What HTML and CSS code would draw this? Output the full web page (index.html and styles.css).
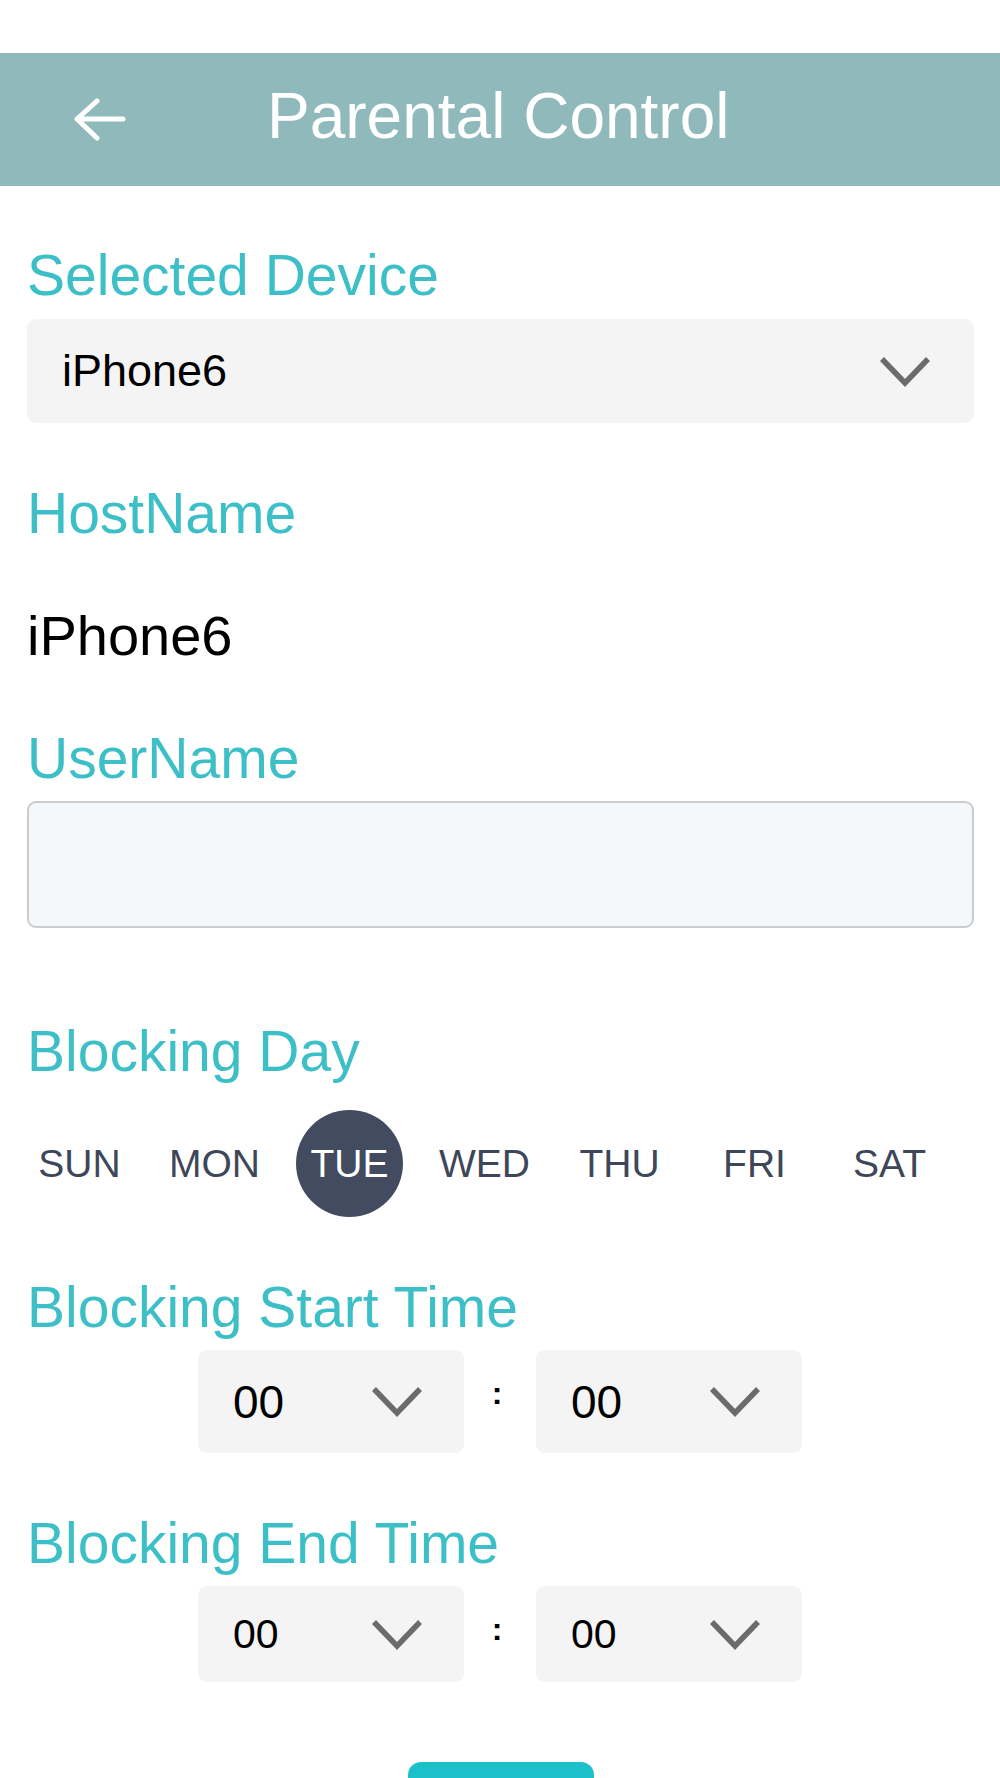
FILE: index.html
```html
<!DOCTYPE html>
<html lang="en">
<head>
    <meta charset="UTF-8">
    <meta name="viewport" content="width=device-width, initial-scale=1.0">
    <title>Parental Control</title>
    <link rel="stylesheet" href="styles.css">
</head>
<body>
    <div class="status-space"></div>

    <header class="topbar">
        <svg class="back-icon" width="52" height="44" viewBox="0 0 52 44">
            <path d="M3 21 H49 M3 21 L23 3 M3 21 L23 40" fill="none" stroke="#fff" stroke-width="5" stroke-linecap="round" stroke-linejoin="round"/>
        </svg>
        <h1 class="title">Parental Control</h1>
    </header>

    <main class="form">
        <div class="field first">
            <div class="label">Selected Device</div>
            <div class="select">
                <span>iPhone6</span>
                <svg class="chevron" width="54" height="31" viewBox="0 0 54 31">
                    <path d="M4 3 L27 27 L50 3" fill="none" stroke="#6b6b6b" stroke-width="5.5"/>
                </svg>
            </div>
        </div>

        <div class="field">
            <div class="label">HostName</div>
            <div class="value">iPhone6</div>
        </div>

        <div class="field">
            <div class="label">UserName</div>
            <input class="text-input" type="text">
        </div>

        <div class="field wide-gap">
            <div class="label">Blocking Day</div>
            <div class="days">
                <span class="day">SUN</span>
                <span class="day">MON</span>
                <span class="day active">TUE</span>
                <span class="day">WED</span>
                <span class="day">THU</span>
                <span class="day">FRI</span>
                <span class="day">SAT</span>
            </div>
        </div>

        <div class="field">
            <div class="label">Blocking Start Time</div>
            <div class="time-row">
                <div class="time-box">
                    <span>00</span>
                    <svg class="chevron" width="54" height="31" viewBox="0 0 54 31">
                        <path d="M4 3 L27 27 L50 3" fill="none" stroke="#6b6b6b" stroke-width="5.5"/>
                    </svg>
                </div>
                <span class="colon">:</span>
                <div class="time-box">
                    <span>00</span>
                    <svg class="chevron" width="54" height="31" viewBox="0 0 54 31">
                        <path d="M4 3 L27 27 L50 3" fill="none" stroke="#6b6b6b" stroke-width="5.5"/>
                    </svg>
                </div>
            </div>
        </div>

        <div class="field">
            <div class="label">Blocking End Time</div>
            <div class="time-row small">
                <div class="time-box">
                    <span>00</span>
                    <svg class="chevron" width="54" height="31" viewBox="0 0 54 31">
                        <path d="M4 3 L27 27 L50 3" fill="none" stroke="#6b6b6b" stroke-width="5.5"/>
                    </svg>
                </div>
                <span class="colon">:</span>
                <div class="time-box">
                    <span>00</span>
                    <svg class="chevron" width="54" height="31" viewBox="0 0 54 31">
                        <path d="M4 3 L27 27 L50 3" fill="none" stroke="#6b6b6b" stroke-width="5.5"/>
                    </svg>
                </div>
            </div>
        </div>

        <button class="save-button" aria-label="Save"></button>
    </main>
</body>
</html>
```

FILE: styles.css
```css
body {
    margin: 0;
    height: 1778px;
    overflow: hidden;
    background-color: #ffffff;
    font-family: "Liberation Sans", Arial, sans-serif;
}
.status-space {
    height: 53px;
}
.topbar {
    display: flex;
    align-items: center;
    height: 133px;
    background-color: #8fb9ba;
}
.back-icon {
    margin-left: 74px;
}
.title {
    margin: -8px 0 0 141px;
    font-size: 64px;
    font-weight: normal;
    line-height: 1;
    color: #ffffff;
}
.form {
    display: flex;
    flex-direction: column;
    padding: 57px 26px 0 27px;
}
.field {
    display: flex;
    flex-direction: column;
    gap: 11px;
    margin-top: 58px;
}
.field.first {
    margin-top: 0;
    gap: 12px;
}
.field.wide-gap {
    margin-top: 91px;
    gap: 27px;
}
.label {
    font-size: 57px;
    line-height: 64px;
    color: #3dbfc7;
}
.select {
    display: flex;
    align-items: center;
    justify-content: space-between;
    height: 104px;
    padding: 0 42px 0 35px;
    background-color: #f4f4f4;
    border-radius: 9px;
    font-size: 45px;
    color: #000000;
}
.value {
    margin-top: 48px;
    font-size: 56px;
    line-height: 64px;
    color: #000000;
}
.text-input {
    box-sizing: border-box;
    height: 127px;
    margin: 0;
    background-color: #f4f8fb;
    border: 2px solid #cccccc;
    border-radius: 9px;
}
.days {
    display: grid;
    grid-template-columns: repeat(7, 135px);
    margin-left: -15px;
    height: 107px;
}
.day {
    display: flex;
    align-items: center;
    justify-content: center;
    font-size: 39px;
    color: #3e4659;
}
.day.active {
    justify-self: center;
    width: 107px;
    height: 107px;
    border-radius: 50%;
    background-color: #424b5f;
    color: #ffffff;
}
.time-row {
    display: flex;
    justify-content: center;
    align-items: center;
    margin-left: -27px;
    margin-right: -26px;
}
.time-box {
    display: flex;
    align-items: center;
    justify-content: space-between;
    box-sizing: border-box;
    width: 266px;
    height: 103px;
    padding: 0 40px 0 35px;
    background-color: #f4f4f4;
    border-radius: 9px;
    font-size: 46px;
    color: #000000;
}
.colon {
    width: 66px;
    padding-right: 6px;
    margin-bottom: 17px;
    text-align: center;
    font-size: 32px;
    font-weight: bold;
    line-height: 1;
    color: #000000;
}
.time-row.small .time-box {
    height: 96px;
    font-size: 41px;
}
.time-row.small .colon {
    margin-bottom: 11px;
}
.save-button {
    align-self: center;
    width: 186px;
    height: 90px;
    margin-top: 80px;
    border: none;
    border-radius: 13px;
    background-color: #1cc0c8;
}
```
